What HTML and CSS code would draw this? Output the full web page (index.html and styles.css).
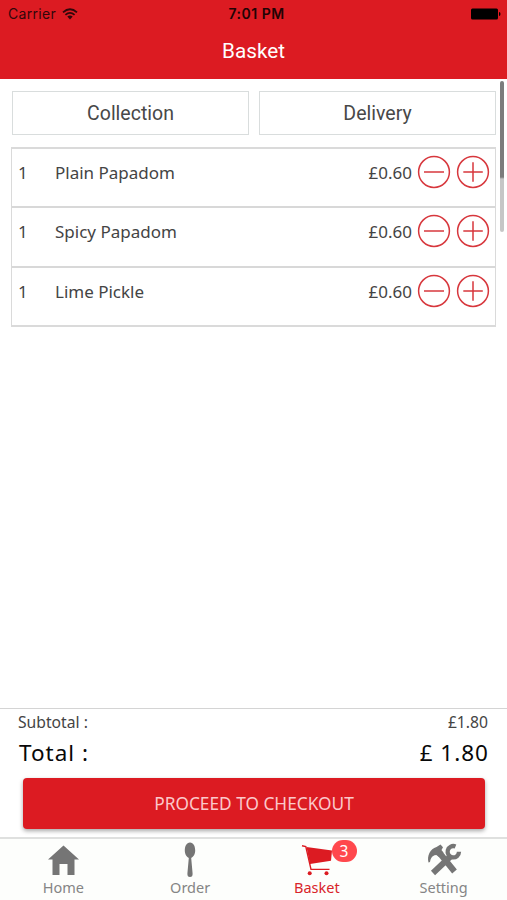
FILE: index.html
```html
<!DOCTYPE html>
<html lang="en">
<head>
<meta charset="utf-8">
<title>Basket</title>
<link rel="stylesheet" href="styles.css">
</head>
<body>
<svg class="defs" aria-hidden="true">
  <symbol id="minus" viewBox="0 0 34 34"><circle cx="17" cy="17" r="15.4"/><path d="M7 17h20"/></symbol>
  <symbol id="plus" viewBox="0 0 34 34"><circle cx="17" cy="17" r="15.4"/><path d="M7.300 17h19.500M17 7.300v19.500"/></symbol>
</svg>
<div class="app">
  <header class="header">
    <div class="status">
      <div class="carrier"><span>Carrier</span>
        <svg class="wifi" viewBox="0 0 16 12"><path d="M1 4.300Q8-1.900 15 4.300M3.400 6.900Q8 2.900 12.600 6.900" fill="none" stroke="currentColor" stroke-width="1.800"/><path d="M5.300 8.500Q8 6.300 10.700 8.500L8 11.400z" fill="currentColor"/></svg>
      </div>
      <div class="time">7:01 PM</div>
      <svg class="battery" viewBox="0 0 30 12"><rect x="0" y="0.500" width="27" height="11" rx="1.500"/><path d="M28 4q1.500 0 1.500 2t-1.500 2z"/></svg>
    </div>
    <h1 class="title">Basket</h1>
  </header>
  <main class="content">
    <div class="modes">
      <button class="mode">Collection</button>
      <button class="mode">Delivery</button>
    </div>
    <ul class="items">
      <li class="item"><span class="qty">1</span><span class="name">Plain Papadom</span><span class="price">£0.60</span><svg class="step"><use href="#minus"/></svg><svg class="step"><use href="#plus"/></svg></li>
      <li class="item"><span class="qty">1</span><span class="name">Spicy Papadom</span><span class="price">£0.60</span><svg class="step"><use href="#minus"/></svg><svg class="step"><use href="#plus"/></svg></li>
      <li class="item"><span class="qty">1</span><span class="name">Lime Pickle</span><span class="price">£0.60</span><svg class="step"><use href="#minus"/></svg><svg class="step"><use href="#plus"/></svg></li>
    </ul>
    <div class="scrollbar"></div>
  </main>
  <section class="summary">
    <div class="line subtotal"><span>Subtotal :</span><span>£1.80</span></div>
    <div class="line total"><span>Total :</span><span>£ 1.80</span></div>
    <button class="checkout">PROCEED TO CHECKOUT</button>
  </section>
  <nav class="tabs">
    <a class="tab"><svg class="icon" viewBox="0 0 36 36"><path d="M18.500 3.500L34 17.500H29.500V33H22.500V22H14.500V33H7.500V17.500H3z"/></svg><span>Home</span></a>
    <a class="tab"><svg class="icon" viewBox="0 0 36 36"><path d="M18 0.500C21.500 0.500 23.200 4.300 23.200 8.500C23.200 12.500 21 15.200 19.200 16L20.600 31.500Q20.800 35 18 35T15.400 31.500L16.800 16C15 15.200 12.800 12.500 12.800 8.500C12.800 4.300 14.500 0.500 18 0.500z"/></svg><span>Order</span></a>
    <a class="tab active"><svg class="icon" viewBox="0 0 36 36"><path d="M7.500 5L33 8.400L32 18.800L11 22z"/><path d="M3 3.800L6.800 4.500L12 27.400H30.500" fill="none" stroke="currentColor" stroke-width="1.400"/><circle cx="10.700" cy="31.300" r="2"/><circle cx="27.500" cy="31.300" r="2"/></svg><span>Basket</span><b class="badge">3</b></a>
    <a class="tab"><svg class="icon" viewBox="0 0 36 36"><path d="M2.500 20.500C0.800 14 4 7 10.500 5L14.500 2.600L17 5.200L15.500 8L17.500 10.700L13 15L10.300 13L8.500 13.200Q4.500 15 4 20z"/><path d="M14 11.500L28.500 29.500M25 14L7 31" fill="none" stroke="#757575" stroke-width="6"/><path d="M29.500 4.500A5.700 5.700 0 1 0 33 9.800" fill="none" stroke="#757575" stroke-width="4.300"/></svg><span>Setting</span></a>
  </nav>
</div>
</body>
</html>
```

FILE: styles.css
```css
* { box-sizing: border-box; }
body { margin: 0; background: #fff; font-family: "Noto Sans", sans-serif; color: #444; }
button { padding: 0; font: inherit; color: inherit; }
.defs { display: none; }
.app { display: flex; flex-direction: column; height: 900px; overflow: hidden; }
.header { height: 79px; flex: none; background: #dc1b22; }
.status { display: grid; grid-template-columns: 1fr auto 1fr; align-items: center; height: 28px; padding: 0 6px 0 8px; color: #31070a; font: 14px/28px Inter, sans-serif; }
.carrier { display: flex; align-items: center; gap: 6px; letter-spacing: 0.3px; }
.wifi { width: 16px; height: 12px; }
.time { padding-left: 4px; font-weight: 600; font-size: 14px; letter-spacing: 0.500px; color: #210304; }
.battery { width: 30px; height: 12px; justify-self: end; fill: #000; }
.title { margin: 0; font: 400 20.700px/46px Roboto, sans-serif; letter-spacing: 0; text-align: center; color: #fff; }
.content { position: relative; flex: 1; padding: 12px 11px 0 11px; }
.modes { display: flex; gap: 10px; padding: 0 0 0 1px; }
.mode { flex: 1; height: 44px; padding-top: 1px; border: 1px solid #d9dddd; background: #fff; font: 19.500px/41px Roboto, sans-serif; color: #484848; }
.items { margin: 12px 0 0; padding: 0; list-style: none; border: 2px solid #dadada; border-width: 2px 1.500px; }
.item { display: flex; height: 59.400px; padding: 6px 5px 0; border-bottom: 2px solid #d8d8d8; font-size: 17px; line-height: 35px; }
.item:last-child { border-bottom: 0; height: 57px; }
.qty { width: 38px; padding-left: 1px; }
.name { flex: 1; }
.price { margin-right: 5px; }
.step { width: 34px; height: 34px; fill: none; stroke: #d7373d; stroke-width: 1.500; }
.step + .step { margin-left: 5px; }
.scrollbar { position: absolute; top: 2px; right: 3px; width: 4px; height: 151px; border-radius: 2px; background: linear-gradient(#7c7c7c 96px, #c6c6c6 98px); }
.summary { flex: none; height: 129px; border-top: 1px solid #d4d4d4; }
.line { display: flex; justify-content: space-between; padding: 0 19px 0 18px; }
.subtotal { height: 26px; font-size: 15.700px; line-height: 26px; }
.total { height: 35px; padding: 0 18px 0 19px; font-size: 22.500px; line-height: 35px; letter-spacing: 1px; color: #080808; }
.checkout { display: block; width: 462px; height: 51px; margin: 8px 0 0 23px; border: 0; border-radius: 4px; background: #dc1b22; box-shadow: 0 2px 4px rgba(0, 0, 0, 0.350); font-size: 17.300px; line-height: 50px; color: #fbc8ca; }
.tabs { display: flex; flex: none; height: 63px; padding: 0; border-top: 2px solid #dfe0df; background: #fdfefc; }
.tab { position: relative; display: flex; flex: 1; flex-direction: column; align-items: center; padding-top: 3px; font-size: 14.500px; line-height: 18px; color: #858585; }
.tab.active { color: #d9242a; }
.icon { width: 36px; height: 36px; fill: #757575; color: #dc1b22; }
.active .icon { fill: #dc1b22; }
.badge { position: absolute; top: 1px; left: 78px; width: 25px; height: 22px; border-radius: 11px; background: #ff484d; color: #fff; font-size: 15.500px; font-weight: 400; line-height: 22px; text-align: center; }
```
